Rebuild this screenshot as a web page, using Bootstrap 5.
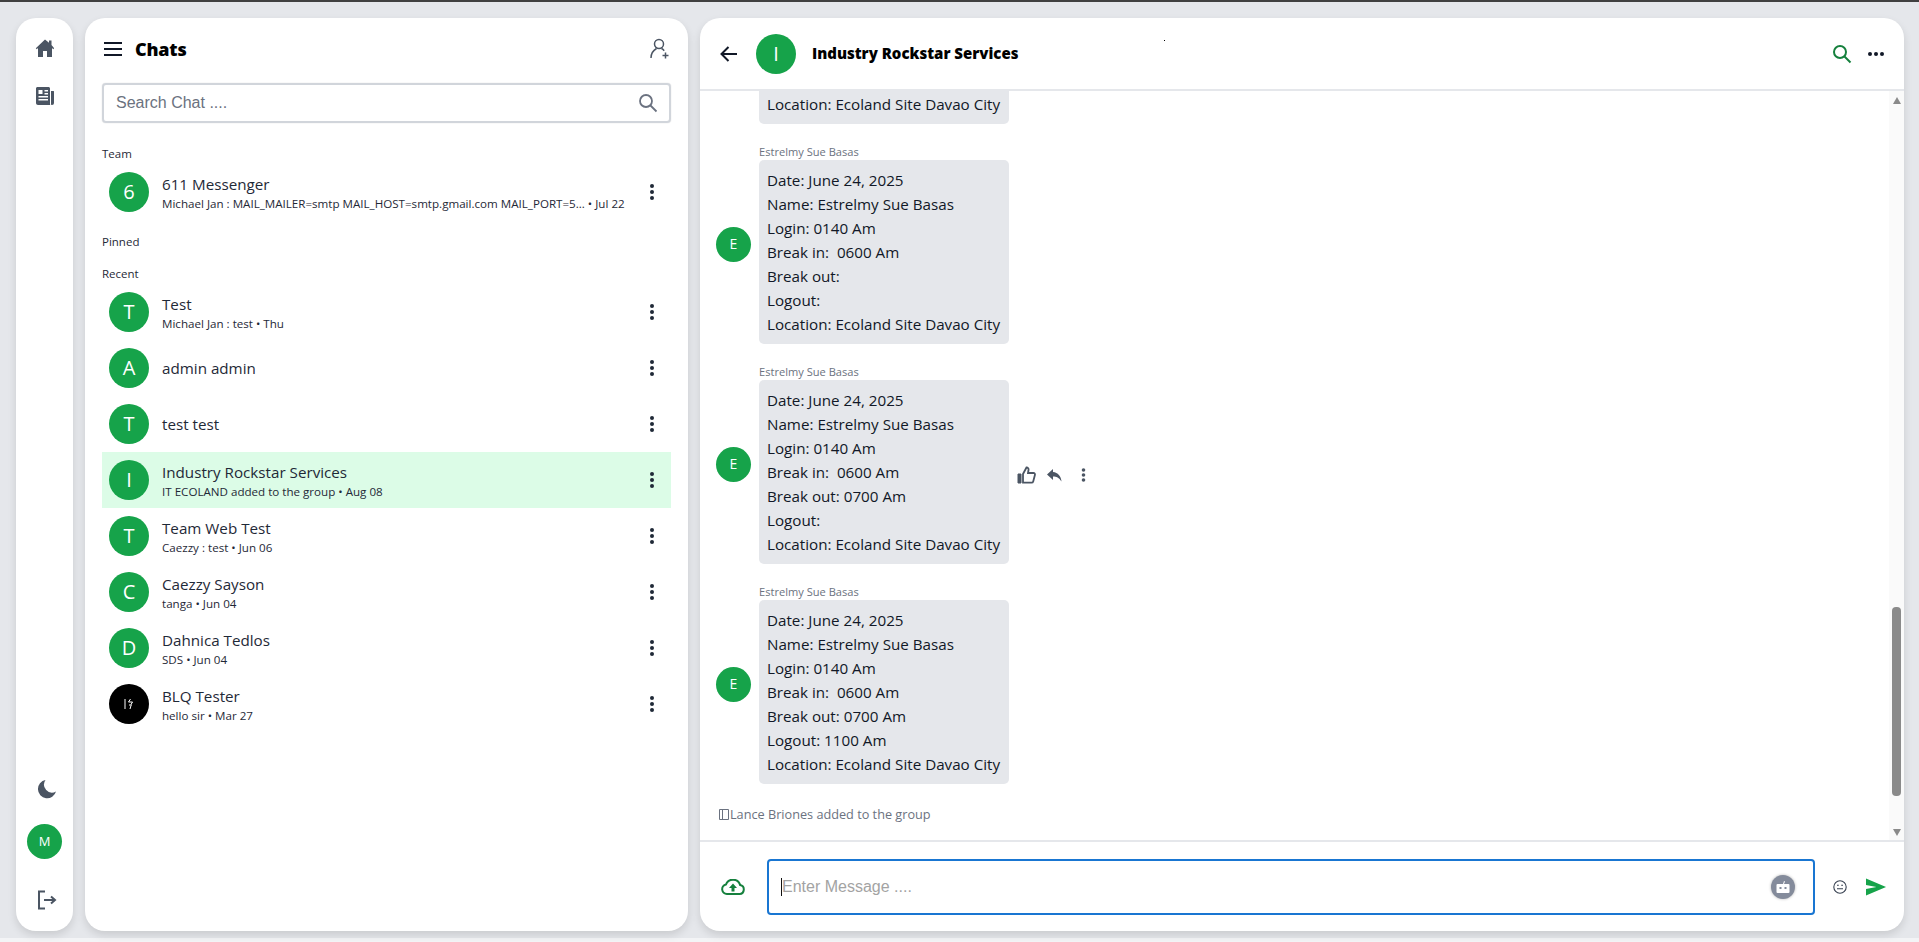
<!doctype html>
<html lang="en"><head><meta charset="utf-8"><title>Chats</title>
<link href="https://cdn.jsdelivr.net/npm/bootstrap@5.3.0/dist/css/bootstrap.min.css" rel="stylesheet">
<style>
html,body{height:100%;overflow:hidden}
body{background:#f3f4f6;font-family:"Open Sans","Noto Sans",sans-serif;color:#111827;border-top:2px solid #404040}
.shell{height:936px;background:#e5e7eb;padding:16px 15px 7px 16px;gap:12px}
.pane{background:#fff;border-radius:20px;box-shadow:0 4px 8px rgba(0,0,0,.12);overflow:hidden}
.rail{width:57px;padding:20px 0 21px}
.rail svg{display:block;color:#4b5563}
.ava{width:40px;height:40px;border-radius:50%;background:#16a34a;color:#fff;font-size:20px;flex:none;display:flex;align-items:center;justify-content:center;line-height:1}
.ava-s{width:35px;height:35px;font-size:14px}
.ava-k{background:#000}
.list-pane{width:603px;padding:0 17px}
.top-row{height:62px;padding:0 1px}
.ttl{font-size:18px;font-weight:800;color:#000;margin-left:12px;letter-spacing:-.2px}
.srch{height:40px;border:2px solid #d1d5db;border-radius:4px;box-shadow:0 0 1px rgba(0,0,0,.25);padding:0 12px;color:#6b7280;font:16px "Liberation Sans",sans-serif}
.sect{font-size:11.5px;line-height:16px;color:#1f2937}
.rowx{height:56px;padding:0 7px;gap:13px}
.rowx.on{background:#dcfce7}
.nm{font-size:15.2px;line-height:20px;color:#1f2937}
.sub{font-size:11.6px;line-height:14px;color:#1f2937;margin-top:3px;white-space:nowrap}
.kb{margin-left:auto;margin-right:10px;color:#1f2937}
.conv{min-width:0}
.head{height:73px;border-bottom:2px solid #e5e7eb;padding:0 20px 0 20px;flex:none;position:relative}
.gname{font-size:15px;font-weight:800;color:#000;margin-left:16px}
.speck{position:absolute;left:464px;top:22px;width:1px;height:1px;background:#000}
.mid{min-height:0;flex:1 1 0}
.msgs{min-width:0;overflow:hidden;justify-content:flex-end;padding:0 0 17px 16px}
.who{font-size:11.1px;line-height:16px;color:#6b7280}
.blk{margin-bottom:20px}
.bub{width:250px;background:#e5e7eb;border-radius:5px;padding:8px;font-size:15.2px;line-height:24px;color:#111827;white-space:pre-wrap}
.bub-cut{margin-left:43px;border-radius:0 0 5px 5px}
.acts{color:#4b5563;margin-left:8px;gap:11px;margin-top:6px}
.sys{font-size:12.7px;line-height:18px;color:#6b7280;gap:1px;margin-left:3px;margin-top:1px}
.bar{width:15px;background:#fafafa;flex:none;padding:6px 3px 4px}
.thumb{width:9px;height:189px;background:#8a8a8a;border-radius:4px;margin-top:auto;margin-bottom:33px}
.tri{width:0;height:0;border-left:4.5px solid transparent;border-right:4.5px solid transparent}
.up{border-bottom:7px solid #8a8a8a}.dn{border-top:7px solid #8a8a8a}
.foot{height:91px;border-top:2px solid #e5e7eb;flex:none;padding:0 17px 0 21px}
.entry{height:56px;border:2px solid #1976d2;border-radius:4px;margin:0 18px 0 22px;padding:0 18px 0 12px;color:#a3a3a3;font:16px "Liberation Sans",sans-serif}
.caret-bar{width:1px;height:18px;background:#111;display:block}
.bot{width:24px;height:24px;border-radius:50%;background:#848b9b;box-shadow:0 0 3px rgba(0,0,0,.3);margin-left:auto}
</style></head><body>
<div class="shell d-flex">
 <nav class="pane rail d-flex flex-column align-items-center flex-none">
  <svg width="20" height="20" viewBox="0 0 20 20" fill="currentColor"><path d="M10 1.5 0.8 10.2l1 1L3 10.1V19h5v-6h4v6h5v-8.900l1.200 1.100 1-1L16.500 7V2.500h-2.500v2.200z"/></svg>
  <svg style="margin-top:28px" width="20" height="20" viewBox="0 0 20 20" fill="currentColor" fill-rule="evenodd"><path d="M1 2.500C1 1.700 1.700 1 2.500 1h11c.8 0 1.500.7 1.500 1.500V18c0 .3.100.6.300 1H3c-1.100 0-2-.9-2-2zM3.500 4v4h4V4zm6 0v1.500h3.500V4zm0 3v1.500h3.500V7zm-6 3v1.500h9.500V10zm0 3v1.500h9.500V13z"/><path d="M16 5h2.500c.3 0 .5.2.5.500V17a2 2 0 0 1-2 2c-.6 0-1-.4-1-1z"/></svg>
  <svg class="mt-auto" style="margin-left:4px" width="20" height="20" viewBox="0 0 20 20" fill="currentColor"><path d="M8.500 1A9.200 9.200 0 1 0 19 12.500 8 8 0 0 1 8.500 1z"/></svg>
  <div class="ava ava-s" style="margin-top:25px;font-size:13px">M</div>
  <svg style="margin:31px 0 0 4px" width="20" height="20" viewBox="0 0 20 20" fill="none" stroke="currentColor" stroke-width="2"><path d="M8 1.500H2v17h6M7 10h10.500"/><path d="M14 6.500l4 3.500-4 3.500" /></svg>
 </nav>
 <section class="pane list-pane d-flex flex-column flex-none">
  <div class="top-row d-flex align-items-center">
   <svg width="20" height="16" viewBox="0 0 20 16" stroke="#111827" stroke-width="2"><path d="M1 2h18M1 8h18M1 14h18"/></svg>
   <span class="ttl">Chats</span>
   <svg class="ms-auto" width="20" height="22" viewBox="0 0 20 22" fill="none" stroke="#4b5563" stroke-width="1.500"><circle cx="9" cy="6" r="4.500"/><path d="M1 20c0-4.500 2-7.500 5.500-9.500M11.500 10.500c1 .5 2 1.300 2.700 2.200M15.500 14.500v6M12.500 17.500h6"/></svg>
  </div>
  <div class="srch d-flex align-items-center justify-content-between flex-none" style="margin-top:3px"><span>Search Chat ....</span>
   <svg width="20" height="20" viewBox="0 0 20 20" fill="none" stroke="#6b7280" stroke-width="1.800" style="margin-right:-1px"><circle cx="8" cy="8" r="6"/><path d="M12.500 12.500 18.500 18.500"/></svg></div>
  <div class="sect" style="margin-top:23px">Team</div>
  <div class="rowx d-flex align-items-center" style="margin-top:2px"><div class="ava">6</div><div><div class="nm">611 Messenger</div><div class="sub">Michael Jan : MAIL_MAILER=smtp MAIL_HOST=smtp.gmail.com MAIL_PORT=5... • Jul 22</div></div><svg class="kb" width="4" height="16" viewBox="0 0 4 16" fill="currentColor"><circle cx="2" cy="2" r="2"/><circle cx="2" cy="8" r="2"/><circle cx="2" cy="14" r="2"/></svg></div>
  <div class="sect" style="margin-top:14px">Pinned</div>
  <div class="sect" style="margin-top:16px;margin-bottom:2px">Recent</div>
  <div class="rowx d-flex align-items-center"><div class="ava">T</div><div><div class="nm">Test</div><div class="sub">Michael Jan : test • Thu</div></div><svg class="kb" width="4" height="16" viewBox="0 0 4 16" fill="currentColor"><circle cx="2" cy="2" r="2"/><circle cx="2" cy="8" r="2"/><circle cx="2" cy="14" r="2"/></svg></div>
  <div class="rowx d-flex align-items-center"><div class="ava">A</div><div><div class="nm">admin admin</div></div><svg class="kb" width="4" height="16" viewBox="0 0 4 16" fill="currentColor"><circle cx="2" cy="2" r="2"/><circle cx="2" cy="8" r="2"/><circle cx="2" cy="14" r="2"/></svg></div>
  <div class="rowx d-flex align-items-center"><div class="ava">T</div><div><div class="nm">test test</div></div><svg class="kb" width="4" height="16" viewBox="0 0 4 16" fill="currentColor"><circle cx="2" cy="2" r="2"/><circle cx="2" cy="8" r="2"/><circle cx="2" cy="14" r="2"/></svg></div>
  <div class="rowx on d-flex align-items-center"><div class="ava">I</div><div><div class="nm">Industry Rockstar Services</div><div class="sub">IT ECOLAND added to the group • Aug 08</div></div><svg class="kb" width="4" height="16" viewBox="0 0 4 16" fill="currentColor"><circle cx="2" cy="2" r="2"/><circle cx="2" cy="8" r="2"/><circle cx="2" cy="14" r="2"/></svg></div>
  <div class="rowx d-flex align-items-center"><div class="ava">T</div><div><div class="nm">Team Web Test</div><div class="sub">Caezzy : test • Jun 06</div></div><svg class="kb" width="4" height="16" viewBox="0 0 4 16" fill="currentColor"><circle cx="2" cy="2" r="2"/><circle cx="2" cy="8" r="2"/><circle cx="2" cy="14" r="2"/></svg></div>
  <div class="rowx d-flex align-items-center"><div class="ava">C</div><div><div class="nm">Caezzy Sayson</div><div class="sub">tanga • Jun 04</div></div><svg class="kb" width="4" height="16" viewBox="0 0 4 16" fill="currentColor"><circle cx="2" cy="2" r="2"/><circle cx="2" cy="8" r="2"/><circle cx="2" cy="14" r="2"/></svg></div>
  <div class="rowx d-flex align-items-center"><div class="ava">D</div><div><div class="nm">Dahnica Tedlos</div><div class="sub">SDS • Jun 04</div></div><svg class="kb" width="4" height="16" viewBox="0 0 4 16" fill="currentColor"><circle cx="2" cy="2" r="2"/><circle cx="2" cy="8" r="2"/><circle cx="2" cy="14" r="2"/></svg></div>
  <div class="rowx d-flex align-items-center"><div class="ava ava-k"><svg width="10" height="12" viewBox="0 0 10 12" fill="none" stroke="#fff"><path d="M1 1v10M6.500 1 4.500 4h4L7 6.500M5 7h3M7 7.500 6 11"/></svg></div><div><div class="nm">BLQ Tester</div><div class="sub">hello sir • Mar 27</div></div><svg class="kb" width="4" height="16" viewBox="0 0 4 16" fill="currentColor"><circle cx="2" cy="2" r="2"/><circle cx="2" cy="8" r="2"/><circle cx="2" cy="14" r="2"/></svg></div>
 </section>
 <main class="pane conv flex-grow-1 d-flex flex-column">
  <header class="head d-flex align-items-center">
   <svg width="18" height="16" viewBox="0 0 18 16" fill="none" stroke="#111827" stroke-width="2"><path d="M17 8H2M8.500 1 1.500 8l7 7"/></svg>
   <div class="ava" style="margin-left:18px">I</div>
   <span class="gname">Industry Rockstar Services</span><i class="speck"></i>
   <svg class="ms-auto" width="20" height="20" viewBox="0 0 20 20" fill="none" stroke="#15803d" stroke-width="2"><circle cx="8" cy="8" r="6"/><path d="M12.500 12.500 18.500 18.500"/></svg>
   <svg class="ms-3" width="16" height="4" viewBox="0 0 16 4" fill="#111827"><circle cx="2" cy="2" r="2"/><circle cx="8" cy="2" r="2"/><circle cx="14" cy="2" r="2"/></svg>
  </header>
  <div class="mid d-flex">
   <div class="msgs flex-grow-1 d-flex flex-column">
    <div class="blk"><div class="bub bub-cut">Location: Ecoland Site Davao City</div></div>
    <div class="blk d-flex align-items-center"><div class="ava ava-s me-2">E</div><div><div class="who">Estrelmy Sue Basas</div><div class="bub">Date: June 24, 2025
Name: Estrelmy Sue Basas
Login: 0140 Am
Break in:  0600 Am
Break out:
Logout:
Location: Ecoland Site Davao City</div></div></div>
    <div class="blk d-flex align-items-center"><div class="ava ava-s me-2">E</div><div><div class="who">Estrelmy Sue Basas</div><div class="d-flex align-items-center"><div class="bub">Date: June 24, 2025
Name: Estrelmy Sue Basas
Login: 0140 Am
Break in:  0600 Am
Break out: 0700 Am
Logout:
Location: Ecoland Site Davao City</div>
      <div class="acts d-flex align-items-center">
       <svg width="19" height="18" viewBox="0 0 19 18" fill="none" stroke="currentColor" stroke-width="1.800"><path d="M6 8 9.500 1.500c1.500 0 2.300 1 2 2.500L11 7h5.500c1 0 1.700.9 1.400 1.900l-1.700 6.500c-.2.800-.9 1.300-1.700 1.300H6z"/><path d="M1 8h3v9H1z" fill="currentColor" stroke-width="1"/></svg>
       <svg width="15" height="13" viewBox="0 0 15 13" fill="currentColor"><path d="M6 0 0 5.500 6 11V7.500c3.500 0 6 1 8.500 5-.5-5.500-3.500-9-8.500-9.500z"/></svg>
       <svg style="margin-left:8px" width="5" height="14" viewBox="0 0 5 14" fill="currentColor"><circle cx="2.500" cy="2" r="1.800"/><circle cx="2.500" cy="7" r="1.800"/><circle cx="2.500" cy="12" r="1.800"/></svg>
      </div></div></div></div>
    <div class="blk d-flex align-items-center"><div class="ava ava-s me-2">E</div><div><div class="who">Estrelmy Sue Basas</div><div class="bub">Date: June 24, 2025
Name: Estrelmy Sue Basas
Login: 0140 Am
Break in:  0600 Am
Break out: 0700 Am
Logout: 1100 Am
Location: Ecoland Site Davao City</div></div></div>
    <div class="sys d-flex align-items-center"><svg width="10" height="11" viewBox="0 0 10 11" fill="none" stroke="#6b7280"><path d="M.5.500h9v10h-9zM3.500.500v10"/></svg><span>Lance Briones added to the group</span></div>
   </div>
   <div class="bar d-flex flex-column align-items-center"><i class="tri up"></i><i class="thumb"></i><i class="tri dn"></i></div>
  </div>
  <footer class="foot d-flex align-items-center">
   <svg width="24" height="16" viewBox="0 0 24 16" fill="none" stroke="#15803d" stroke-width="2"><path d="M6 15h12.500a4.500 4.500 0 0 0 .7-8.900A7.500 7.500 0 0 0 5 5.500 4.800 4.800 0 0 0 6 15z"/><path d="M12 4.500 8 9h2.500v3.500h3V9H16z" fill="#15803d" stroke="none"/></svg>
   <div class="entry flex-grow-1 d-flex align-items-center"><span class="caret-bar"></span><span>Enter Message ....</span>
    <div class="bot d-flex align-items-center justify-content-center"><svg width="14" height="14" viewBox="0 0 14 14" fill="#fff"><path d="M8 1l1 .4L8 4H7z"/><rect x="0.500" y="4" width="13" height="9" rx="1"/><rect x="3.500" y="7" width="2" height="2" fill="#848b9b"/><rect x="8.500" y="7" width="2" height="2" fill="#848b9b"/></svg></div></div>
   <svg width="14" height="14" viewBox="0 0 14 14" fill="none" stroke="#374151" stroke-width="1.100"><circle cx="7" cy="7" r="6.200"/><path d="M4 8.800h6M4 5.300h1.800M8.200 5.300H10"/></svg>
   <svg style="margin-left:19px" width="21" height="18" viewBox="0 0 22 18" fill="#16a34a"><path d="M0 0 21 9 0 18V11L11 9 0 7z"/></svg>
  </footer>
 </main>
</div>
<script src="https://cdn.jsdelivr.net/npm/bootstrap@5.3.0/dist/js/bootstrap.bundle.min.js"></script>
</body></html>
